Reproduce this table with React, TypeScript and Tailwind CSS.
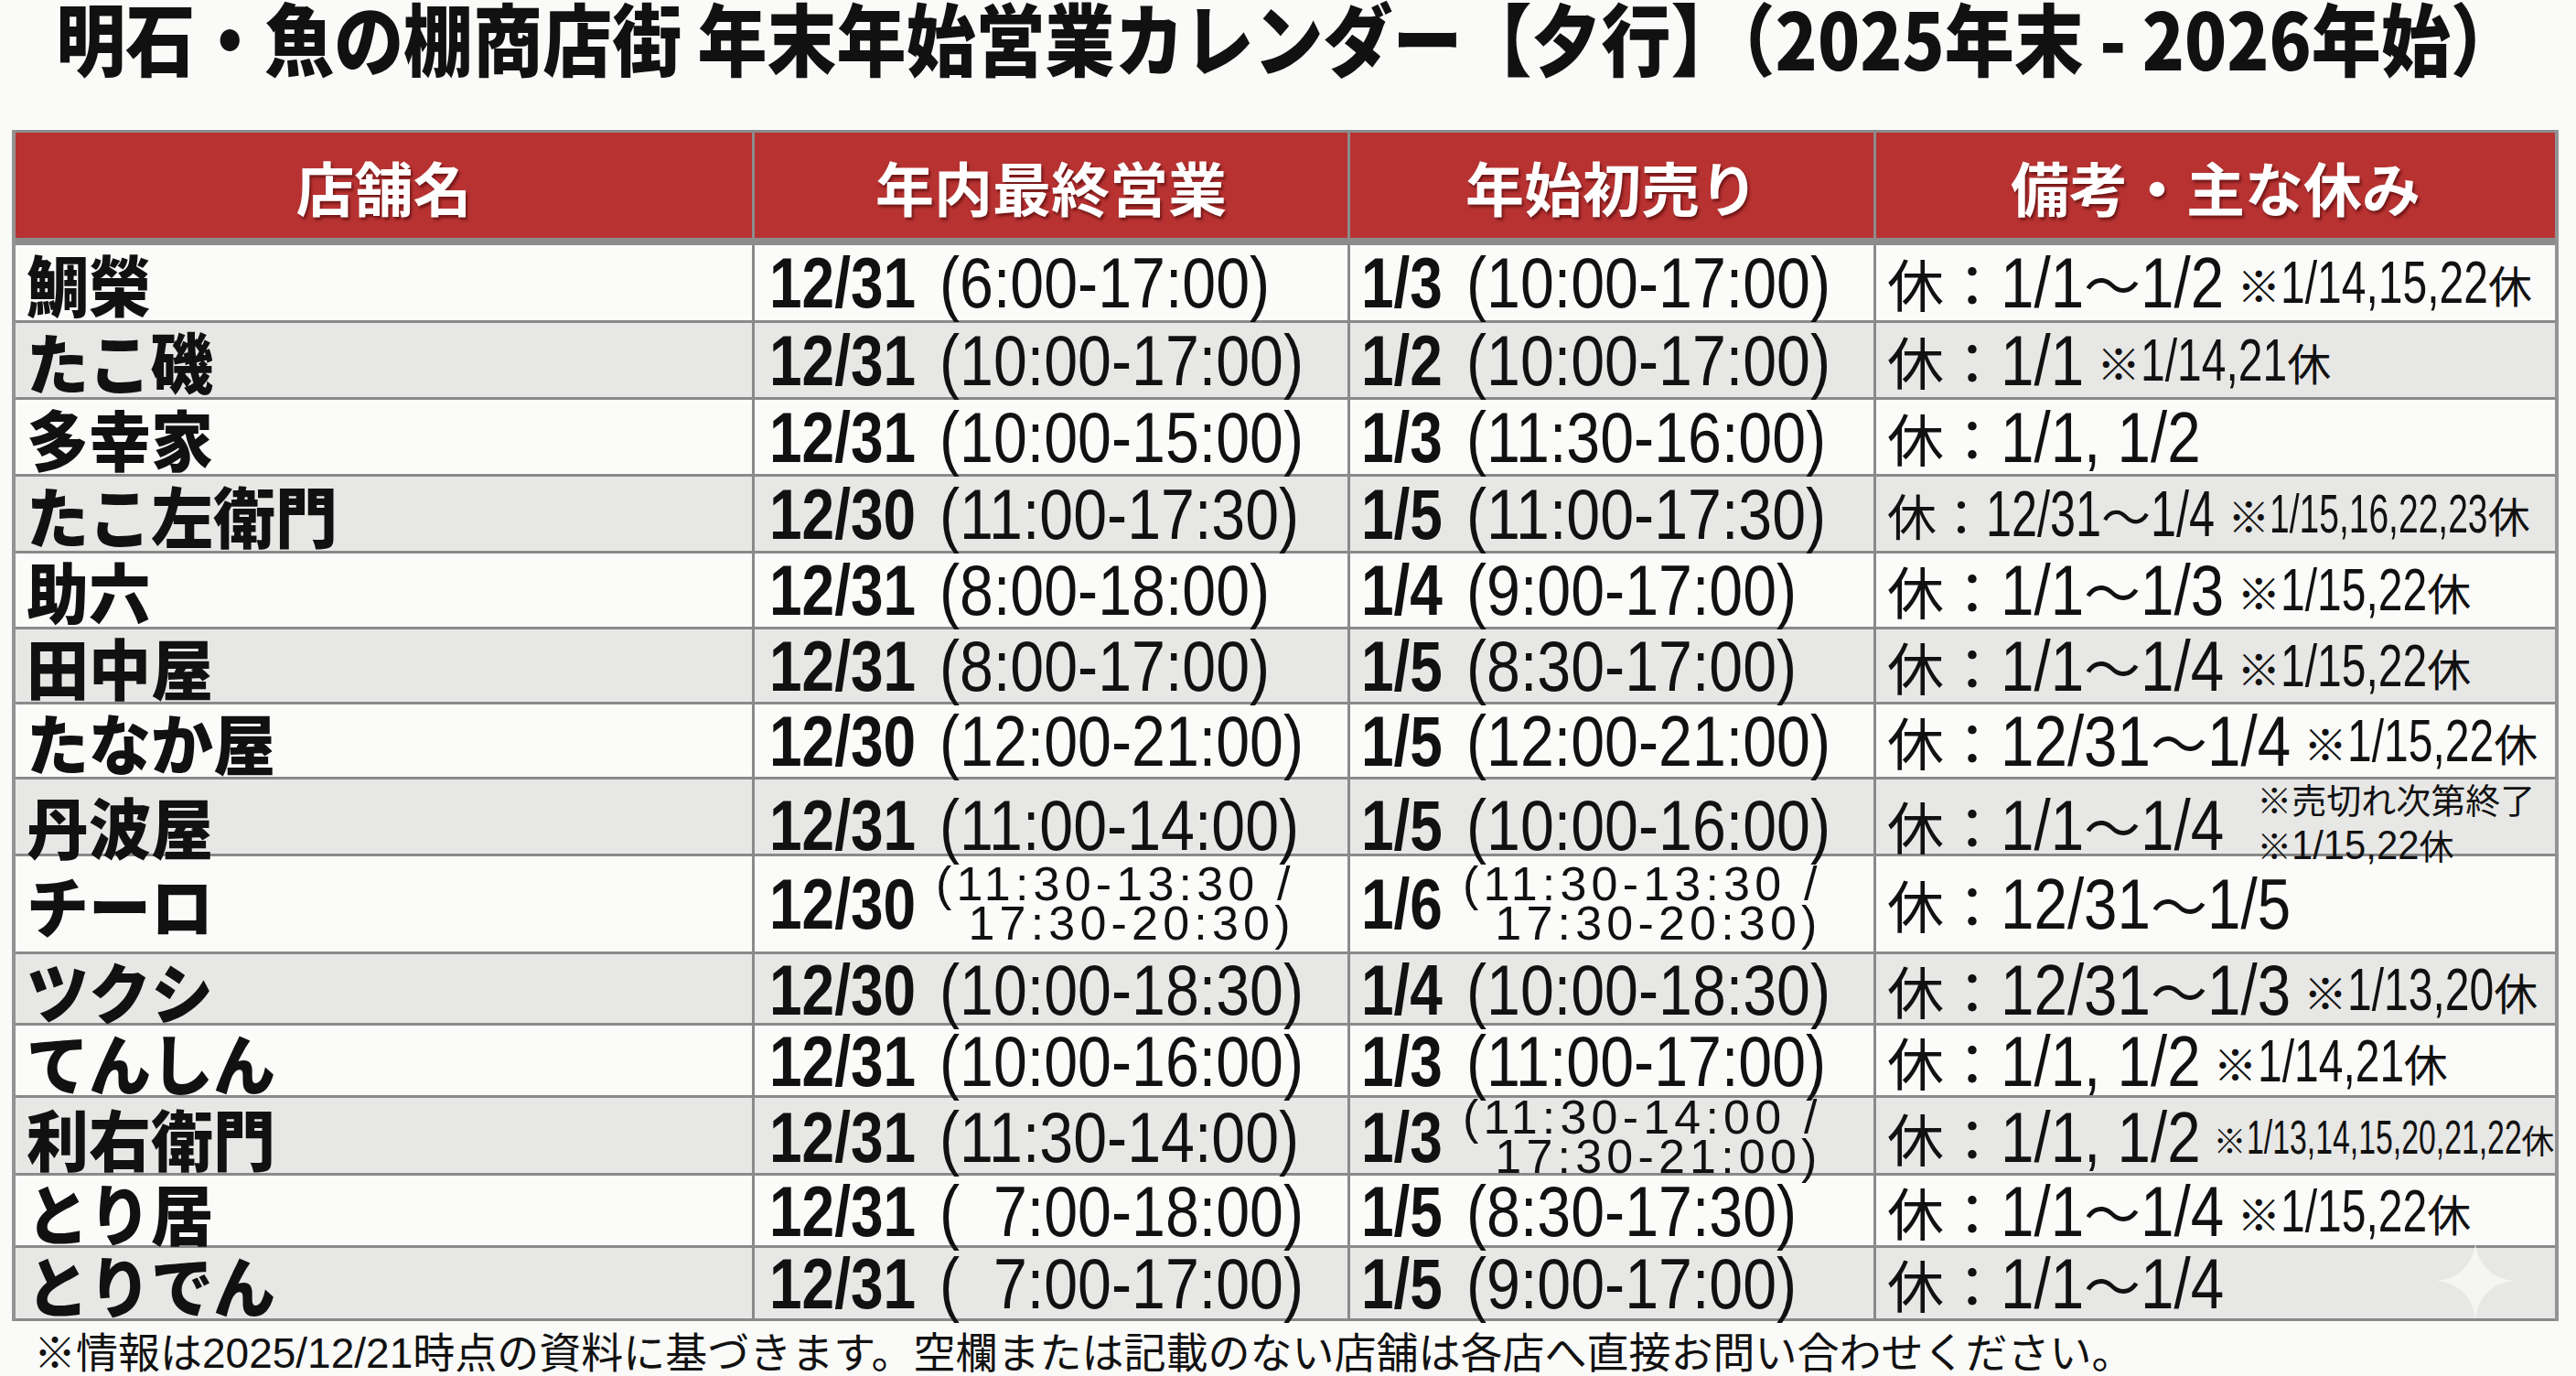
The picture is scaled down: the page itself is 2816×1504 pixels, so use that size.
import React from "react";

// --- Data (read off the printed calendar) ---
type Slot = { d: string; t: string | [string, string] };
type Run = { fs: number; size: string; k: number; sx: string; cjk: string };
type Row = {
  name: string;
  h: string;
  last: Slot;
  first: Slot;
  off: string;
  offRun?: Run;
  note?: string | string[];
  noteRun?: Run;
};

// narrow look = Liberation Sans squeezed horizontally
const MAIN: Run = { fs: 78, size: "text-[78px]", k: 0.84, sx: "scale-x-[0.84]", cjk: "text-[62px]" };
const NOTE: Run = { fs: 64, size: "text-[64px]", k: 0.75, sx: "scale-x-[0.75]", cjk: "text-[48px]" };
const MAIN_SM: Run = { fs: 70, size: "text-[70px]", k: 0.72, sx: "scale-x-[0.72]", cjk: "text-[54px]" };
const NOTE_SM: Run = { fs: 60, size: "text-[60px]", k: 0.65, sx: "scale-x-[0.65]", cjk: "text-[46px]" };
const NOTE_XS: Run = { fs: 52, size: "text-[52px]", k: 0.65, sx: "scale-x-[0.65]", cjk: "text-[36px]" };
const NOTE_2L: Run = { fs: 44, size: "text-[44px]", k: 0.95, sx: "scale-x-[0.95]", cjk: "text-[38px]" };

const rows: Row[] = [
  { name: "鯛榮", h: "h-[85px]", last: { d: "12/31", t: "(6:00-17:00)" }, first: { d: "1/3", t: "(10:00-17:00)" }, off: "休：1/1〜1/2", note: "※1/14,15,22休" },
  { name: "たこ磯", h: "h-[84px]", last: { d: "12/31", t: "(10:00-17:00)" }, first: { d: "1/2", t: "(10:00-17:00)" }, off: "休：1/1", note: "※1/14,21休" },
  { name: "多幸家", h: "h-[84px]", last: { d: "12/31", t: "(10:00-15:00)" }, first: { d: "1/3", t: "(11:30-16:00)" }, off: "休：1/1, 1/2" },
  { name: "たこ左衛門", h: "h-[84px]", last: { d: "12/30", t: "(11:00-17:30)" }, first: { d: "1/5", t: "(11:00-17:30)" }, off: "休：12/31〜1/4", offRun: MAIN_SM, note: "※1/15,16,22,23休", noteRun: NOTE_SM },
  { name: "助六", h: "h-[83px]", last: { d: "12/31", t: "(8:00-18:00)" }, first: { d: "1/4", t: "(9:00-17:00)" }, off: "休：1/1〜1/3", note: "※1/15,22休" },
  { name: "田中屋", h: "h-[82px]", last: { d: "12/31", t: "(8:00-17:00)" }, first: { d: "1/5", t: "(8:30-17:00)" }, off: "休：1/1〜1/4", note: "※1/15,22休" },
  { name: "たなか屋", h: "h-[82px]", last: { d: "12/30", t: "(12:00-21:00)" }, first: { d: "1/5", t: "(12:00-21:00)" }, off: "休：12/31〜1/4", note: "※1/15,22休" },
  { name: "丹波屋", h: "h-[84px]", last: { d: "12/31", t: "(11:00-14:00)" }, first: { d: "1/5", t: "(10:00-16:00)" }, off: "休：1/1〜1/4", note: ["※売切れ次第終了", "※1/15,22休"], noteRun: NOTE_2L },
  { name: "チーロ", h: "h-[107px]", last: { d: "12/30", t: ["(11:30-13:30 /", "17:30-20:30)"] }, first: { d: "1/6", t: ["(11:30-13:30 /", "17:30-20:30)"] }, off: "休：12/31〜1/5" },
  { name: "ツクシ", h: "h-[78px]", last: { d: "12/30", t: "(10:00-18:30)" }, first: { d: "1/4", t: "(10:00-18:30)" }, off: "休：12/31〜1/3", note: "※1/13,20休" },
  { name: "てんしん", h: "h-[79px]", last: { d: "12/31", t: "(10:00-16:00)" }, first: { d: "1/3", t: "(11:00-17:00)" }, off: "休：1/1, 1/2", note: "※1/14,21休" },
  { name: "利右衛門", h: "h-[85px]", last: { d: "12/31", t: "(11:30-14:00)" }, first: { d: "1/3", t: ["(11:30-14:00 /", "17:30-21:00)"] }, off: "休：1/1, 1/2", note: "※1/13,14,15,20,21,22休", noteRun: NOTE_XS },
  { name: "とり居", h: "h-[79px]", last: { d: "12/31", t: "(\u00a0\u00a07:00-18:00)" }, first: { d: "1/5", t: "(8:30-17:30)" }, off: "休：1/1〜1/4", note: "※1/15,22休" },
  { name: "とりでん", h: "h-[80px]", last: { d: "12/31", t: "(\u00a0\u00a07:00-17:00)" }, first: { d: "1/5", t: "(9:00-17:00)" }, off: "休：1/1〜1/4" },
];

const cols = "grid grid-cols-[808px_651px_575px_742px]";
const LATIN = "[font-family:'Liberation_Sans','Noto_Sans_CJK_JP',sans-serif]";

// Liberation Sans advance widths, so the squeezed box keeps its real width
const ADV: Record<string, number> = { "/": 0.278, ",": 0.278, " ": 0.278, "\u00a0": 0.278, ":": 0.278, "-": 0.333, "(": 0.333, ")": 0.333 };
const adv = (s: string) => [...s].reduce((a, c) => a + (ADV[c] ?? 0.556), 0);

const Squeeze = ({ text, fs, k, sx }: { text: string; fs: number; k: number; sx: string }) => (
  <span className="inline-block whitespace-nowrap" style={{ width: adv(text) * fs * k }}>
    <span className={`inline-block origin-left ${sx}`}>{text}</span>
  </span>
);

const Mixed = ({ text, run }: { text: string; run: Run }) => (
  <span className={`${run.size} leading-none`}>
    {text.split(/([^\x00-\x7F\u00a0]+)/).filter(Boolean).map((s, i) =>
      /[^\x00-\x7F\u00a0]/.test(s) ? (
        <span key={i} className={run.cjk}>{s}</span>
      ) : (
        <Squeeze key={i} text={s} fs={run.fs} k={run.k} sx={run.sx} />
      )
    )}
  </span>
);

const TimeCell = ({ slot, pad }: { slot: Slot; pad: string }) => (
  <div className={`flex items-center border-r-[3px] border-[#8a8a8a] ${pad} whitespace-nowrap text-[#111] ${LATIN}`}>
    <span className="text-[78px] leading-none font-bold">
      <Squeeze text={slot.d} fs={78} k={0.82} sx="scale-x-[0.82]" />
    </span>
    {typeof slot.t === "string" ? (
      <span className="text-[78px] leading-none ml-[26px]">
        <Squeeze text={slot.t} fs={78} k={0.85} sx="scale-x-[0.85]" />
      </span>
    ) : (
      <div className="ml-[22px] text-right text-[52px] leading-[43px] tracking-[0.1em]">
        <div>{slot.t[0]}</div>
        <div>{slot.t[1]}</div>
      </div>
    )}
  </div>
);

const OffCell = ({ row }: { row: Row }) => (
  <div className={`flex items-center pl-[12px] whitespace-nowrap text-[#111] ${LATIN}`}>
    <Mixed text={row.off} run={row.offRun || MAIN} />
    {typeof row.note === "string" && (
      <span className="ml-[14px] flex items-center">
        <Mixed text={row.note} run={row.noteRun || NOTE} />
      </span>
    )}
    {Array.isArray(row.note) && (
      <div className="ml-[36px] leading-[36px]">
        {row.note.map((n) => (
          <div key={n}>
            <Mixed text={n} run={row.noteRun || NOTE_2L} />
          </div>
        ))}
      </div>
    )}
  </div>
);

const Sparkle = () => (
  <svg viewBox="0 0 100 100" className="absolute left-[2659px] top-[1356px] w-[94px] h-[88px] opacity-60">
    <path d="M50 2 C53 30 70 47 98 50 C70 53 53 70 50 98 C47 70 30 53 2 50 C30 47 47 30 50 2 Z" fill="#ffffff" />
  </svg>
);

export default function App() {
  return (
    <div className="relative w-[2816px] h-[1504px] overflow-hidden bg-[#fafaf8]">
      {/* Title */}
      <div className="h-[142px] pt-[6px] flex justify-center">
        <h1 className="text-[76px] leading-none font-black text-[#111] scale-y-[1.13] whitespace-nowrap [font-family:'Noto_Sans_CJK_JP',sans-serif]">
          明石・魚の棚商店街 年末年始営業カレンダー【夕行】（2025年末 - 2026年始）
        </h1>
      </div>

      {/* Table */}
      <div className="ml-[13px] w-[2784px] border-x-4 border-[#939393]">
        <div className={`${cols} h-[126px] bg-[#b83232] border-t-[3px] border-b-[8px] border-[#8c8c8c] text-white text-[64px] leading-none font-bold [font-family:'Noto_Sans_CJK_JP',sans-serif] [text-shadow:2px_3px_3px_rgba(60,0,0,0.55)]`}>
          <div className="flex items-center justify-center border-r-[3px] border-[#8c8c8c]">店舗名</div>
          <div className="flex items-center justify-center border-r-[3px] border-[#8c8c8c]">年内最終営業</div>
          <div className="flex items-center justify-center border-r-[3px] border-[#8c8c8c]">年始初売り</div>
          <div className="flex items-center justify-center">備考・主な休み</div>
        </div>

        {rows.map((r, i) => (
          <div
            key={r.name}
            className={`${cols} ${r.h} border-b-[3px] border-[#8a8a8a] ${i % 2 === 0 ? "bg-[#fbfbf9]" : "bg-[#e7e7e5]"}`}
          >
            <div className="flex items-center pl-[12px] border-r-[3px] border-[#8a8a8a] text-[68px] leading-none font-black text-[#111] whitespace-nowrap [font-family:'Noto_Sans_CJK_JP',sans-serif]">
              <span className="inline-block scale-y-[1.06]">{r.name}</span>
            </div>
            <TimeCell slot={r.last} pad="pl-[16px]" />
            <TimeCell slot={r.first} pad="pl-[12px]" />
            <OffCell row={r} />
          </div>
        ))}
      </div>

      <p className={`pl-[37px] mt-[12px] text-[46px] leading-none text-[#111] whitespace-nowrap ${LATIN}`}>
        ※情報は2025/12/21時点の資料に基づきます。空欄または記載のない店舗は各店へ直接お問い合わせください。
      </p>

      <Sparkle />
    </div>
  );
}
